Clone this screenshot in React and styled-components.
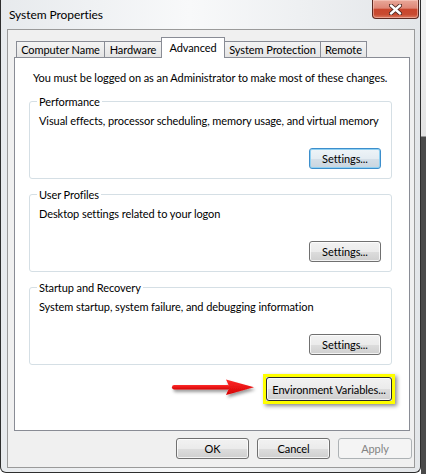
import React from 'react'
import styled, { createGlobalStyle } from 'styled-components'

const GlobalStyle = createGlobalStyle`
  html, body {
    margin: 0;
    padding: 0;
    background: #fff;
    overflow: hidden;
  }
  body {
    font-family: Lato, "Liberation Sans", sans-serif;
    font-size: 11px;
    letter-spacing: -0.08px;
    color: #000;
    white-space: nowrap;
  }
`

const Desktop = styled.div`
  display: flex;
  width: 426px;
  height: 474px;
  background: #fff;
`

const Backdrop = styled.div`
  width: 5px;
  background: linear-gradient(to bottom, #f2f2f2 0, #e2e2e2 136px, #4a4a4a 137px, #4a4a4a 100%);
`

const Window = styled.div`
  width: 421px;
  height: 473px;
  box-sizing: border-box;
  border: 1px solid #2e2e2e;
  border-top: none;
  border-radius: 0 0 6px 6px;
  background: linear-gradient(to right, #e7eaed, #f8f9fa 45%, #e3e6e9);
  padding: 0 5px 4px 6px;
  display: flex;
  flex-direction: column;
`

const TitleBar = styled.div`
  height: 29px;
  flex: none;
  display: flex;
  justify-content: space-between;
  align-items: flex-start;
`

const Title = styled.div`
  margin: 7px 0 0 2px;
  line-height: 15px;
  font-size: 12px;
`

const CloseButton = styled.div`
  width: 47px;
  height: 19px;
  box-sizing: border-box;
  margin-right: -4px;
  border: 1px solid #5c2a22;
  border-top: none;
  border-radius: 0 0 4px 4px;
  background: linear-gradient(#e9a899 0%, #de8777 45%, #c9462d 52%, #c84b31 80%, #dc7a60 100%);
  box-shadow: inset 0 0 0 1px rgba(255, 220, 210, 0.45);
  display: flex;
  align-items: center;
  justify-content: center;
`

const Client = styled.div`
  flex: 1;
  min-height: 0;
  border: 1px solid #9a9a9a;
  background: #f0f0f0;
  padding: 7px 4px 0 6px;
  display: flex;
  flex-direction: column;
`

const TabRow = styled.div`
  display: flex;
  align-items: flex-end;
  height: 21px;
  flex: none;
  padding-left: 2px;
  margin-bottom: -1px;
  position: relative;
  z-index: 1;
`

const Tab = styled.div`
  width: ${p => p.$w}px;
  box-sizing: border-box;
  margin-left: -1px;
  border: 1px solid #898c95;
  border-bottom: none;
  text-align: center;
  line-height: 15px;
  &:first-child {
    margin-left: 0;
  }
  ${p => p.$active ? `
    height: 21px;
    padding-top: 2px;
    background: #fff;
    position: relative;
    z-index: 2;
  ` : `
    height: 16px;
    margin-bottom: 1px;
    background: linear-gradient(#f4f4f4, #e4e4e4);
  `}
`

const Panel = styled.div`
  flex: none;
  background: #fff;
  border: 1px solid #898c95;
  padding: 12px 17px 26px 14px;
  display: flex;
  flex-direction: column;
`

const Notice = styled.div`
  margin: 0 0 9px 4px;
  line-height: 15px;
`

const Groups = styled.div`
  display: flex;
  flex-direction: column;
  gap: 8px;
`

const Group = styled.fieldset`
  margin: 0;
  padding: 0 10px 9px 9px;
  border: 1px solid #d5dfe5;
  border-radius: 3px;
  display: flex;
  flex-direction: column;
`

const Legend = styled.legend`
  margin-left: -2px;
  padding: 0 2px;
  line-height: 15px;
`

const Description = styled.div`
  margin-top: 4px;
  line-height: 15px;
`

const ButtonRow = styled.div`
  display: flex;
  justify-content: flex-end;
  align-items: center;
  margin-top: ${p => p.$top || 0}px;
  margin-right: ${p => p.$right || 0}px;
`

const Button = styled.button`
  width: ${p => p.$w || 72}px;
  height: ${p => p.$h || 21}px;
  box-sizing: border-box;
  padding: 0;
  border: 1px solid #707070;
  border-radius: 3px;
  background: linear-gradient(#f2f2f2 0%, #ebebeb 50%, #dddddd 51%, #cfcfcf 100%);
  box-shadow: inset 0 0 0 1px rgba(255, 255, 255, 0.75);
  font-family: Lato, "Liberation Sans", sans-serif;
  font-size: 11px;
  letter-spacing: -0.08px;
  color: #000;
  white-space: nowrap;
  ${p => p.$focus && `
    border-color: #3c8ecc;
    background: linear-gradient(#eef4f8 0%, #e4ecf2 50%, #d5dfe8 51%, #c9d5df 100%);
    box-shadow: inset 0 0 0 1px #8fd0f2;
  `}
  ${p => p.$strong && `
    border-color: #2a2a2a;
  `}
  ${p => p.$disabled && `
    border-color: #adb2b5;
    background: #f4f4f4;
    box-shadow: none;
    color: #838383;
  `}
`

const Highlight = styled.div`
  display: flex;
  border: 3px solid #ffff00;
  box-shadow: 2px 2px 4px rgba(0, 0, 0, 0.45), inset 0 0 0 1px rgba(0, 0, 0, 0.15);
`

const Footer = styled.div`
  flex: none;
  display: flex;
  justify-content: flex-end;
  gap: 8px;
  margin: 7px -2px 0 0;
`

const CloseGlyph = () => (
  <svg width="13" height="11" viewBox="0 0 13 11">
    <path d="M2 1.5 L11 9.5 M11 1.5 L2 9.5" stroke="#4a2620" strokeWidth="4.2" strokeLinecap="round" />
    <path d="M2 1.5 L11 9.5 M11 1.5 L2 9.5" stroke="#fff" strokeWidth="2.4" strokeLinecap="round" />
  </svg>
)

const Arrow = () => (
  <svg width="86" height="24" viewBox="0 0 86 24" style={{ marginRight: 6, overflow: 'visible' }}>
    <defs>
      <filter id="arrowShadow" x="-10%" y="-40%" width="130%" height="200%">
        <feDropShadow dx="1.5" dy="2.5" stdDeviation="1.5" floodColor="#000" floodOpacity="0.4" />
      </filter>
      <linearGradient id="arrowFill" x1="0" y1="0" x2="0" y2="1">
        <stop offset="0" stopColor="#ff2a2a" />
        <stop offset="1" stopColor="#d40000" />
      </linearGradient>
    </defs>
    <g filter="url(#arrowShadow)" fill="url(#arrowFill)">
      <rect x="1" y="8" width="58" height="4.5" rx="2.2" />
      <path d="M55 2.5 L83 10.2 L55 18 L58.5 10.2 Z" />
    </g>
  </svg>
)

const groups = [
  { title: 'Performance', text: 'Visual effects, processor scheduling, memory usage, and virtual memory', focus: true },
  { title: 'User Profiles', text: 'Desktop settings related to your logon' },
  { title: 'Startup and Recovery', text: 'System startup, system failure, and debugging information' },
]

const tabs = [
  { label: 'Computer Name', w: 89 },
  { label: 'Hardware', w: 58 },
  { label: 'Advanced', w: 64, active: true },
  { label: 'System Protection', w: 97 },
  { label: 'Remote', w: 47 },
]

const App = () => {
  return (
    <Desktop>
      <GlobalStyle />
      <Window>
        <TitleBar>
          <Title>System Properties</Title>
          <CloseButton><CloseGlyph /></CloseButton>
        </TitleBar>
        <Client>
          <TabRow>
            {tabs.map(t => (
              <Tab key={t.label} $w={t.w} $active={t.active}>{t.label}</Tab>
            ))}
          </TabRow>
          <Panel>
            <Notice>You must be logged on as an Administrator to make most of these changes.</Notice>
            <Groups>
              {groups.map(g => (
                <Group key={g.title}>
                  <Legend>{g.title}</Legend>
                  <Description>{g.text}</Description>
                  <ButtonRow $top={20}>
                    <Button $focus={g.focus}>Settings...</Button>
                  </ButtonRow>
                </Group>
              ))}
            </Groups>
            <ButtonRow $top={9} $right={-3}>
              <Arrow />
              <Highlight>
                <Button $w={126} $h={24} $strong>Environment Variables...</Button>
              </Highlight>
            </ButtonRow>
          </Panel>
          <Footer>
            <Button $w={73}>OK</Button>
            <Button $w={73}>Cancel</Button>
            <Button $w={74} $disabled>Apply</Button>
          </Footer>
        </Client>
      </Window>
      <Backdrop />
    </Desktop>
  )
}

export default App
